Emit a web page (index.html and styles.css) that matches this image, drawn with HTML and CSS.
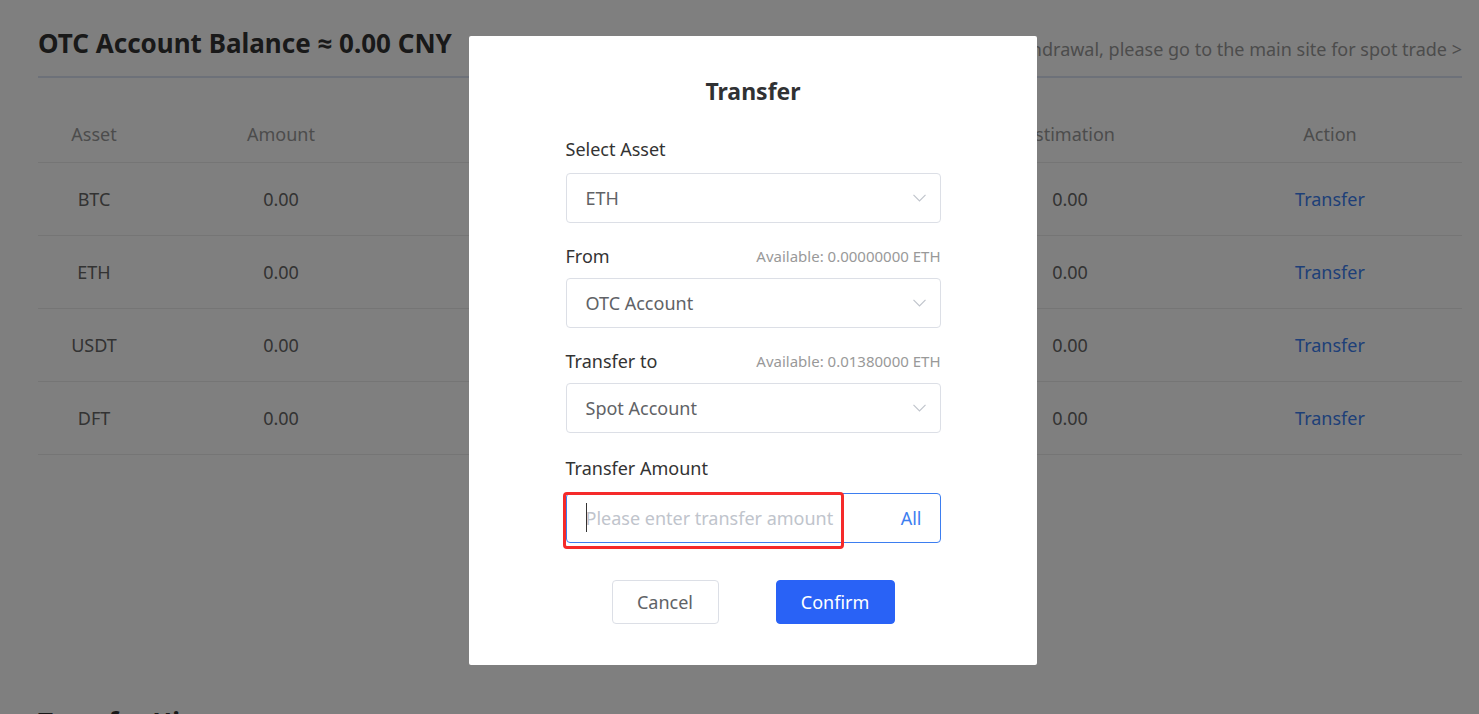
FILE: index.html
```html
<!DOCTYPE html>
<html lang="en">
<head>
    <meta charset="UTF-8">
    <meta name="viewport" content="width=device-width, initial-scale=1.0">
    <title>OTC Account</title>
    <link rel="stylesheet" href="styles.css">
</head>
<body>

    <div class="page">
        <!-- En-tête du solde -->
        <div class="balance-head">
            <h2 class="balance-title">OTC Account Balance &asymp; 0.00 CNY</h2>
            <a class="main-link" href="#">For deposit and withdrawal, please go to the main site for spot trade &gt;</a>
        </div>

        <!-- Tableau des actifs -->
        <div class="asset-table">
            <div class="asset-row head">
                <span>Asset</span>
                <span>Amount</span>
                <span>Frozen</span>
                <span>Available</span>
                <span>Estimation</span>
                <span>Action</span>
            </div>
            <div class="asset-row">
                <span>BTC</span><span>0.00</span><span>0.00</span><span>0.00</span><span>0.00</span>
                <a class="row-link" href="#">Transfer</a>
            </div>
            <div class="asset-row">
                <span>ETH</span><span>0.00</span><span>0.00</span><span>0.00</span><span>0.00</span>
                <a class="row-link" href="#">Transfer</a>
            </div>
            <div class="asset-row">
                <span>USDT</span><span>0.00</span><span>0.00</span><span>0.00</span><span>0.00</span>
                <a class="row-link" href="#">Transfer</a>
            </div>
            <div class="asset-row">
                <span>DFT</span><span>0.00</span><span>0.00</span><span>0.00</span><span>0.00</span>
                <a class="row-link" href="#">Transfer</a>
            </div>
        </div>

        <h2 class="history-title">Transfer History</h2>
    </div>

    <!-- Fenêtre de transfert -->
    <div class="overlay">
        <div class="dialog">
            <h3 class="dialog-title">Transfer</h3>

            <div class="form">
                <div class="form-item first-item">
                    <div class="form-label"><span>Select Asset</span></div>
                    <div class="select">
                        <span>ETH</span>
                        <svg class="chevron" width="13" height="8" viewBox="0 0 13 8"><path d="M0.5 0.8 L6.5 6.8 L12.5 0.8" fill="none" stroke="#c0c4cc" stroke-width="1.2"/></svg>
                    </div>
                </div>

                <div class="form-item">
                    <div class="form-label"><span>From</span><span class="available">Available: 0.00000000 ETH</span></div>
                    <div class="select">
                        <span>OTC Account</span>
                        <svg class="chevron" width="13" height="8" viewBox="0 0 13 8"><path d="M0.5 0.8 L6.5 6.8 L12.5 0.8" fill="none" stroke="#c0c4cc" stroke-width="1.2"/></svg>
                    </div>
                </div>

                <div class="form-item">
                    <div class="form-label"><span>Transfer to</span><span class="available">Available: 0.01380000 ETH</span></div>
                    <div class="select">
                        <span>Spot Account</span>
                        <svg class="chevron" width="13" height="8" viewBox="0 0 13 8"><path d="M0.5 0.8 L6.5 6.8 L12.5 0.8" fill="none" stroke="#c0c4cc" stroke-width="1.2"/></svg>
                    </div>
                </div>

                <div class="form-item amount-item">
                    <div class="form-label"><span>Transfer Amount</span></div>
                    <div class="amount-box">
                        <input type="text" class="amount-input" placeholder="Please enter transfer amount">
                        <span class="all-btn">All</span>
                        <span class="caret"></span>
                        <span class="highlight"></span>
                    </div>
                </div>
            </div>

            <div class="dialog-buttons">
                <button class="btn btn-cancel">Cancel</button>
                <button class="btn btn-confirm">Confirm</button>
            </div>
        </div>
    </div>

</body>
</html>
```

FILE: styles.css
```css
/* Style de la page */
body {
    font-family: "Noto Sans", "Open Sans", sans-serif;
    margin: 0;
    padding: 0;
    background-color: #fff;
    overflow: hidden;
}

.page {
    padding: 0 17px 0 38px;
}

/* En-tête */
.balance-head {
    display: flex;
    justify-content: space-between;
    align-items: flex-end;
    padding-top: 24px;
    padding-bottom: 14px;
    border-bottom: 2px solid #dae2f2;
}

.balance-title {
    margin: 0;
    font-size: 26px;
    line-height: 38px;
    font-weight: 700;
    color: #333;
}

.main-link {
    font-size: 18px;
    line-height: 26px;
    color: #999;
    text-decoration: none;
}

/* Tableau */
.asset-table {
    margin-top: 27px;
}

.asset-row {
    display: grid;
    grid-template-columns: 112px 262px 268px 262px 256px 264px;
    align-items: center;
    justify-items: center;
    height: 73px;
    box-sizing: border-box;
    border-bottom: 1px solid #ebebeb;
    font-size: 18px;
    color: #666;
}

.asset-row.head {
    height: 58px;
    color: #999;
}

.row-link {
    color: #3d7ef0;
    text-decoration: none;
}

.history-title {
    margin: 248px 0 0;
    font-size: 26px;
    line-height: 38px;
    font-weight: 700;
    color: #333;
}

/* Fenêtre modale */
.overlay {
    position: fixed;
    top: 0;
    left: 0;
    right: 0;
    bottom: 0;
    background-color: rgba(0, 0, 0, 0.5);
}

.dialog {
    width: 568px;
    height: 629px;
    margin: 36px 0 0 469px;
    box-sizing: border-box;
    background-color: #fff;
    border-radius: 2px;
    padding-top: 38px;
}

.dialog-title {
    margin: 0;
    text-align: center;
    font-size: 23px;
    line-height: 34px;
    font-weight: 700;
    color: #303133;
}

.form {
    width: 375px;
    margin: 29px auto 0;
}

.form-item {
    margin-bottom: 21px;
}

.form-label {
    display: flex;
    justify-content: space-between;
    align-items: center;
    height: 24px;
    line-height: 24px;
    font-size: 18px;
    color: #333;
    margin-bottom: 10px;
}

.first-item .form-label {
    margin-bottom: 12px;
}

.available {
    font-size: 15px;
    color: #999;
}

.select {
    height: 50px;
    box-sizing: border-box;
    border: 1px solid #dcdfe6;
    border-radius: 4px;
    padding: 0 14px 0 19px;
    display: flex;
    justify-content: space-between;
    align-items: center;
    font-size: 18px;
    color: #606266;
}

/* Champ du montant */
.amount-item {
    margin-top: 23px;
}

.amount-item .form-label {
    margin-bottom: 13px;
}

.amount-box {
    position: relative;
    height: 50px;
    box-sizing: border-box;
    border: 1px solid #3d7ef0;
    border-radius: 4px;
    display: flex;
    align-items: center;
    padding: 0 18px 0 19px;
}

.amount-input {
    flex: 1;
    border: none;
    outline: none;
    padding: 0;
    font-family: inherit;
    font-size: 18px;
    color: #606266;
    background: transparent;
}

.amount-input::placeholder {
    color: #c0c4cc;
}

.all-btn {
    font-size: 18px;
    color: #3d7ef0;
}

.caret {
    position: absolute;
    left: 19px;
    top: 9px;
    width: 1px;
    height: 29px;
    background-color: #333;
}

.highlight {
    position: absolute;
    left: -4px;
    top: -2px;
    width: 281px;
    height: 57px;
    box-sizing: border-box;
    border: 3px solid #f52a2a;
    border-radius: 4px;
}

/* Boutons */
.dialog-buttons {
    display: flex;
    justify-content: center;
    gap: 57px;
    margin-top: 37px;
}

.btn {
    height: 44px;
    font-family: inherit;
    font-size: 18px;
    border-radius: 4px;
    cursor: pointer;
}

.btn-cancel {
    width: 107px;
    background-color: #fff;
    border: 1px solid #dcdfe6;
    color: #606266;
}

.btn-confirm {
    width: 119px;
    background-color: #2962f6;
    border: 1px solid #2962f6;
    color: #fff;
}
```
